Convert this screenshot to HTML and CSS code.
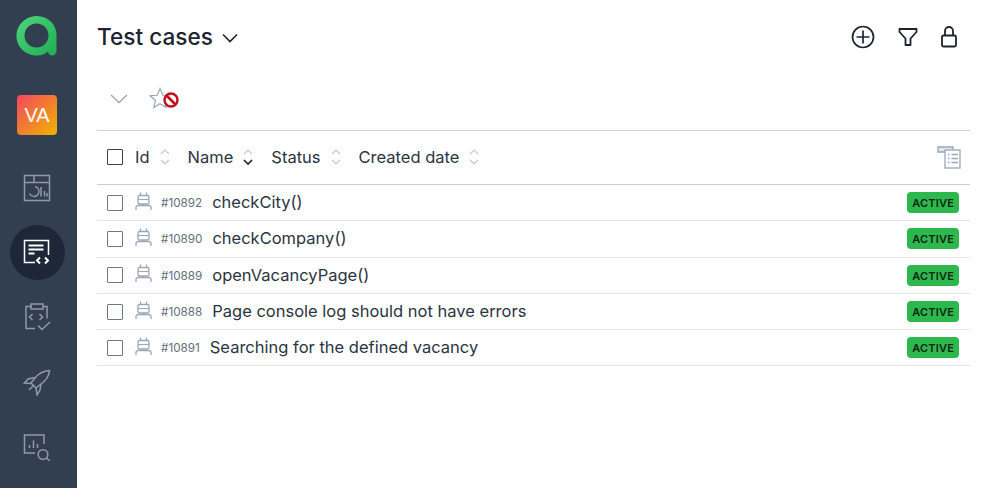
FILE: index.html
```html
<!DOCTYPE html>
<html lang="en">
  <head>
    <meta charset="UTF-8" />
    <title>Test cases</title>
    <link rel="stylesheet" href="styles.css">
  </head>
  <body>
    <aside class="sidebar">
      <svg class="logo" width="42" height="42" viewBox="0 0 42 42">
        <defs>
          <linearGradient id="logo-grad" x1="0" y1="0" x2="1" y2="1">
            <stop offset="0" stop-color="#4fd67c" />
            <stop offset="1" stop-color="#1fae54" />
          </linearGradient>
        </defs>
        <path d="M21 1C9.500 1 .5 10 .5 21S9.500 40.500 21 40.500c4.500 0 8-1.500 11-4 .5 2.800 2.200 4 4 4 2.500 0 4.500-2 4.500-4.500V20C40.500 9.500 32 1 21 1Z" fill="url(#logo-grad)" />
        <circle cx="20.500" cy="20.500" r="12" fill="#323f50" />
      </svg>
      <div class="avatar">VA</div>
      <nav class="nav">
        <a class="nav-item">
          <svg width="28" height="28" viewBox="0 0 28 28" fill="none" stroke="#8e9aab" stroke-width="1.500">
            <rect x="1.500" y="1.500" width="25" height="25" />
            <path d="M1.500 8.500h25M11 1.500v7" />
            <path d="M12 12.500a5 5 0 1 1-5.500 7" />
            <path d="M18 13v9.500M21.500 17v5.500M24 19v3.500" />
          </svg>
        </a>
        <a class="nav-item active">
          <svg width="28" height="28" viewBox="0 0 28 28" fill="none" stroke="#fff" stroke-width="1.500">
            <path d="M25.500 16V1.500H1.500v22H12" />
            <path d="M5.500 6.500h15M5.500 10.500h15" stroke-width="2" />
            <path d="M5.500 14.500h6" stroke-width="2" />
            <path d="M17 18.500l-3 3 3 3M22 18.500l3 3-3 3" stroke-width="2" />
          </svg>
        </a>
        <a class="nav-item">
          <svg width="28" height="28" viewBox="0 0 28 28" fill="none" stroke="#8e9aab" stroke-width="1.500">
            <path d="M9 3.500H3v22h9M20 3.500h4v12" />
            <rect x="8" y="1" width="12" height="5" />
            <path d="M9.500 11l-3 3 3 3M16.500 11l3 3-3 3" />
            <path d="M15 22.500l4 4 8-7.500" />
          </svg>
        </a>
        <a class="nav-item">
          <svg width="28" height="28" viewBox="0 0 28 28" fill="none" stroke="#8e9aab" stroke-width="1.500">
            <path d="M26.500 2.500c-6 .5-11 3-14.500 7.500L8 15l5 5 5-4c5-3.500 8-8 8.500-13.500Z" />
            <path d="M12 9.500l-7 1.500-3.500 4 6.500.5M18 16l-1 6-3 5-1-7" />
            <path d="M6 22l5-5" />
          </svg>
        </a>
        <a class="nav-item">
          <svg width="28" height="28" viewBox="0 0 28 28" fill="none" stroke="#8e9aab" stroke-width="1.500">
            <path d="M21 11V2H1.500v18H12" />
            <path d="M6.500 15v-3M10.500 15V7.500M14.500 15v-4" />
            <circle cx="20" cy="21.500" r="4.800" />
            <path d="M23.500 25l3.500 3" />
          </svg>
        </a>
      </nav>
    </aside>

    <main class="content">
      <header class="top">
        <div class="title-wrap">
          <h1>Test cases</h1>
          <svg width="16" height="10" viewBox="0 0 16 10" fill="none" stroke="#1b2430" stroke-width="1.600">
            <path d="M1 1.500l7 7 7-7" />
          </svg>
        </div>
        <div class="actions">
          <svg width="24" height="24" viewBox="0 0 24 24" fill="none" stroke="#1b2430" stroke-width="1.700">
            <circle cx="12" cy="12" r="10.500" />
            <path d="M12 5.500v13M5.500 12h13" />
          </svg>
          <svg width="20" height="20" viewBox="0 0 20 20" fill="none" stroke="#1b2430" stroke-width="1.800" stroke-linejoin="round">
            <path d="M1.500 2h17v3l-6 6.500V18h-5v-6.500l-6-6.500Z" />
          </svg>
          <svg width="16" height="22" viewBox="0 0 16 22" fill="none" stroke="#1b2430" stroke-width="1.800">
            <rect x="1" y="9.500" width="14" height="11" rx="1.500" />
            <path d="M4 9.500V5a4 4 0 0 1 8 0v4.500" />
          </svg>
        </div>
      </header>

      <div class="filters">
        <svg width="18" height="10" viewBox="0 0 18 10" fill="none" stroke="#9aa7b8" stroke-width="1.300">
          <path d="M1 1l8 7.500L17 1" />
        </svg>
        <span class="fav-off">
          <svg width="30" height="24" viewBox="0 0 30 24">
            <path d="M11 1.500l2.800 6.800 7.200.5-5.500 4.700 1.700 7-6.200-3.800-6.200 3.800 1.700-7L1 8.800l7.200-.5Z" fill="#fff" stroke="#9aa7b8" stroke-width="1.200" />
            <circle cx="22" cy="13" r="6.500" fill="#fff" stroke="#c20f1c" stroke-width="2.400" />
            <path d="M17.500 8.500l9 9" stroke="#c20f1c" stroke-width="2.600" />
          </svg>
        </span>
      </div>

      <section class="table">
        <div class="table-head">
          <span class="check check-dark"></span>
          <span class="col">Id <svg class="sort"><use href="#sort-icon" /></svg></span>
          <span class="col">Name <svg class="sort sort-active"><use href="#sort-active-icon" /></svg></span>
          <span class="col">Status <svg class="sort"><use href="#sort-icon" /></svg></span>
          <span class="col">Created date <svg class="sort"><use href="#sort-icon" /></svg></span>
          <svg class="columns-icon" width="24" height="24" viewBox="0 0 24 24" fill="none" stroke="#9aa7b8" stroke-width="1.300">
            <path d="M8 7H1V2h15v3" fill="#e4e8ee" />
            <rect x="8" y="5" width="15" height="18" fill="#fff" />
            <path d="M11 9.500h1.500M14.500 9.500H21M11 13.500h1.500M14.500 13.500H21M11 17.500h1.500M14.500 17.500H21" />
          </svg>
        </div>
        <div id="rows"></div>
      </section>
    </main>

    <svg class="defs" width="0" height="0">
      <symbol id="sort-icon" viewBox="0 0 12 18">
        <path d="M2 6l4-4 4 4M2 12l4 4 4-4" fill="none" stroke="#c3cad3" stroke-width="1.200" />
      </symbol>
      <symbol id="sort-active-icon" viewBox="0 0 12 18">
        <path d="M2 6l4-4 4 4" fill="none" stroke="#c3cad3" stroke-width="1.200" />
        <path d="M2 12l4 4 4-4" fill="none" stroke="#1b2430" stroke-width="1.600" />
      </symbol>
      <symbol id="robot-icon" viewBox="0 0 17 18">
        <path d="M5.500 3.500V.5M11.500 3.500V.5M8.500 12v1.500M1 18v-3l1.500-1.500h12L16 15v3" fill="none" stroke="#9aa7b8" stroke-width="1.300" />
        <rect x="3" y="3.500" width="11" height="8.500" rx="1.500" fill="none" stroke="#9aa7b8" stroke-width="1.300" />
        <path d="M3 7.500h11" fill="none" stroke="#9aa7b8" stroke-width="1.100" />
      </symbol>
    </svg>

    <script>
      const testCases = [
        { id: 10892, name: "checkCity()" },
        { id: 10890, name: "checkCompany()" },
        { id: 10889, name: "openVacancyPage()" },
        { id: 10888, name: "Page console log should not have errors" },
        { id: 10891, name: "Searching for the defined vacancy" },
      ];

      const rows = document.getElementById("rows");
      testCases.forEach((item) => {
        const row = document.createElement("div");
        row.classList.add("row");
        row.innerHTML = `
          <span class="check"></span>
          <svg class="robot"><use href="#robot-icon" /></svg>
          <span class="case-id">#${item.id}</span>
          <span class="case-name">${item.name}</span>
          <span class="badge">ACTIVE</span>
        `;
        rows.appendChild(row);
      });
    </script>
  </body>
</html>
```

FILE: styles.css
```css
html,
body {
  height: 100%;
}

body {
  font-family: Inter, "Liberation Sans", sans-serif;
  margin: 0;
  padding: 0;
  display: flex;
  background-color: #fff;
  color: #2b3441;
  overflow: hidden;
}

.defs {
  position: absolute;
}

.sidebar {
  width: 77px;
  flex: none;
  background-color: #323f50;
  border-right: 3px solid #323f50;
  display: flex;
  flex-direction: column;
  align-items: center;
  padding-top: 15px;
  box-sizing: border-box;
}

.avatar {
  width: 40px;
  height: 40px;
  margin-top: 38px;
  border-radius: 4px;
  background: linear-gradient(135deg, #f4475e, #f0b400);
  color: #fff;
  font-family: "Liberation Sans", sans-serif;
  font-size: 20px;
  line-height: 41px;
  text-align: center;
}

.nav {
  margin-top: 25.500px;
  display: flex;
  flex-direction: column;
  align-items: center;
  gap: 9.700px;
}

.nav-item {
  width: 55px;
  height: 55px;
  border-radius: 50%;
  display: flex;
  align-items: center;
  justify-content: center;
}

.nav-item.active {
  background-color: #1d2738;
}

.content {
  flex: 1;
  padding: 0 20px;
  min-width: 0;
}

.top {
  height: 73px;
  display: flex;
  align-items: center;
  justify-content: space-between;
}

.title-wrap {
  display: flex;
  align-items: center;
  gap: 9px;
}

.title-wrap svg {
  margin-top: 2px;
}

h1 {
  margin: 0;
  font-size: 22.600px;
  font-weight: 500;
  color: #1b2430;
}

.actions {
  display: flex;
  align-items: center;
  gap: 23px;
  padding-right: 13px;
}

.filters {
  height: 51px;
  padding-bottom: 6px;
  display: flex;
  align-items: center;
  gap: 21px;
  padding-left: 13px;
}

.fav-off {
  display: flex;
}

.table {
  border-top: 1px solid #c9d0d7;
}

.table-head {
  height: 51px;
  padding: 0 10px 2px;
  display: flex;
  align-items: center;
  border-bottom: 1px solid #c9d0d7;
  font-size: 16.500px;
}

.col {
  display: flex;
  align-items: center;
  gap: 9px;
  margin-right: 17px;
}

.check {
  width: 14px;
  height: 14px;
  flex: none;
  border: 1.500px solid #6f7a88;
  border-radius: 1px;
  margin-right: 12px;
}

.check-dark {
  border-color: #3b4350;
}

.sort {
  width: 12px;
  height: 18px;
}

.columns-icon {
  margin-left: auto;
  margin-right: -1px;
}

.row {
  height: 35.300px;
  display: flex;
  align-items: center;
  padding: 0 11px 0 10px;
  border-bottom: 1px solid #e2e6ea;
}

.robot {
  width: 17px;
  height: 18px;
  margin-top: -4px;
}

.case-id {
  margin-left: 9px;
  margin-top: 1px;
  font-size: 11.700px;
  color: #636e7c;
}

.case-name {
  margin-left: 10px;
  margin-top: -1px;
  font-size: 16.500px;
}

.badge {
  margin-left: auto;
  height: 21px;
  padding: 0 5px;
  border-radius: 4px;
  background-color: #2db84d;
  color: #0f2415;
  font-size: 11px;
  font-weight: 600;
  line-height: 23px;
  letter-spacing: 0.2px;
}
```
